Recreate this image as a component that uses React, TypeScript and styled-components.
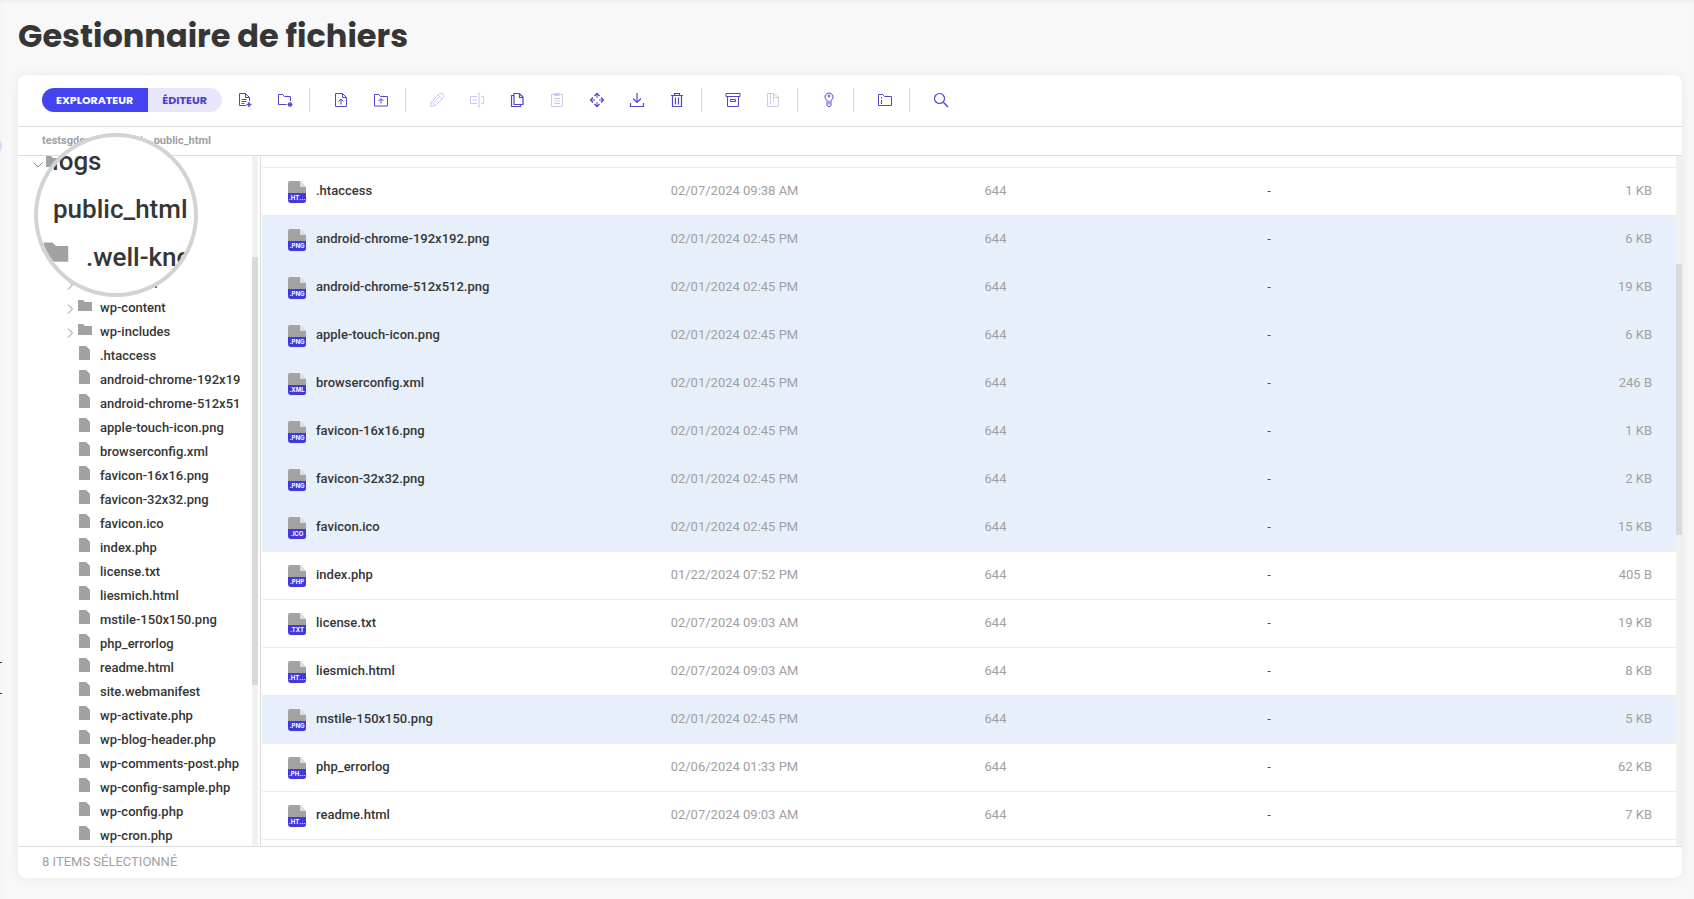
import React from "react";
import styled, { createGlobalStyle, css } from "styled-components";

const GlobalStyle = createGlobalStyle`
  *, *::before, *::after { box-sizing: border-box; }
  body {
    margin: 0;
    background: #f8f8f8;
    color: #363636;
    font-family: Roboto, "Liberation Sans", sans-serif;
    font-size: 13px;
    line-height: 24px;
  }
`;

const Page = styled.div`
  position: relative;
  display: flex;
  flex-direction: column;
  height: 100vh;
  padding: 16px 12px 21px 18px;
  overflow: hidden;
  box-shadow: inset 0 3px 4px -1px #ececec;
`;

/* Slivers of the collapsed navigation that peek in at the left edge. */
const NavBubble = styled.span`
  position: absolute;
  top: 136px;
  left: -18px;
  width: 20px;
  height: 20px;
  border-radius: 50%;
  background: #cfe0fb;
`;

const NavMark = styled.span<{ $top: number }>`
  position: absolute;
  top: ${(p) => p.$top}px;
  left: 0;
  width: 2px;
  height: 1px;
  background: #333;
`;

const Title = styled.h1`
  margin: 0 0 19px;
  font-family: Poppins, Inter, sans-serif;
  font-size: 32px;
  font-weight: 700;
  line-height: 40px;
`;

const Card = styled.main`
  position: relative;
  flex: 1;
  min-height: 0;
  display: flex;
  flex-direction: column;
  background: #fff;
  border-radius: 8px;
  box-shadow: 0 0 12px rgba(0, 0, 0, 0.07);
`;

const Toolbar = styled.div`
  flex: none;
  display: flex;
  align-items: center;
  height: 52px;
  padding: 0 24px 2px;
  border-bottom: 1px solid #dcdcdc;
`;

const Tabs = styled.div`
  display: flex;
  height: 24px;
  margin-right: 3px;
  border-radius: 12px;
  overflow: hidden;
`;

const Tab = styled.button<{ $active?: boolean }>`
  border: 0;
  padding: 0 15px 0 14px;
  font-family: Poppins, "Open Sans", sans-serif;
  font-size: 11px;
  font-weight: 700;
  line-height: 24px;
  color: ${(p) => (p.$active ? "#fff" : "#4a3fd0")};
  background: ${(p) => (p.$active ? "#4343f0" : "#e9e6fc")};
`;

const ToolButton = styled.button`
  display: flex;
  align-items: center;
  justify-content: center;
  width: 40px;
  height: 24px;
  padding: 0;
  border: 0;
  background: none;
  color: #5247cc;
  &:disabled { color: #cdc8f2; }
`;

const Divider = styled.span`
  width: 1px;
  height: 24px;
  margin: 0 11px 0 4px;
  background: #d6d6d6;
`;

const Icon = styled.svg`
  width: 16px;
  height: 16px;
  fill: none;
  stroke: currentColor;
`;

const Breadcrumb = styled.nav`
  flex: none;
  display: flex;
  height: 29px;
  padding-left: 24px;
  border-bottom: 1px solid #dcdcdc;
`;

const Crumb = styled.a`
  color: #a0a0a0;
  font-size: 11px;
  font-weight: 700;
  line-height: 28px;
  text-decoration: none;
  &:not(:last-child)::after { content: "/"; margin: 0 11px 0 4px; }
`;

const Body = styled.div`
  flex: 1;
  min-height: 0;
  display: flex;
`;

const Sidebar = styled.aside`
  flex: none;
  display: flex;
  justify-content: space-between;
  width: 243px;
  padding-right: 2px;
  border-right: 1px solid #dcdcdc;
  overflow: hidden;
`;

const Tree = styled.ul`
  width: 222px;
  margin: -2px 0 0;
  padding: 0;
  list-style: none;
  overflow: hidden;
`;

const TreeItem = styled.li<{ $root?: boolean }>`
  display: flex;
  height: 24px;
  padding-left: ${(p) => (p.$root ? 14 : 46)}px;
  font-weight: 500;
  line-height: 20px;
  white-space: nowrap;
`;

const Chevron = styled.svg`
  flex: none;
  width: 12px;
  height: 12px;
  margin-top: 5px;
  fill: none;
  stroke: #8c8c8c;
`;

const TreeIcon = styled.svg`
  flex: none;
  width: 16px;
  height: 16px;
  margin: 0 7px 0 1px;
  fill: #a2a2a2;
`;

const Track = styled.div`
  flex: none;
  width: 6px;
  background: #f1f1f1;
`;

const Thumb = styled.div<{ $from: number; $size: number }>`
  position: relative;
  top: ${(p) => p.$from}%;
  height: ${(p) => p.$size}%;
  background: #d9d9d9;
`;

const Listing = styled.section`
  flex: 1;
  min-width: 0;
  padding-left: 1px;
  overflow: hidden;
`;

const Table = styled.table`
  width: 100%;
  border-collapse: separate;
  border-spacing: 0;
  table-layout: fixed;
`;

const HeadRow = styled.tr`
  height: 12px;
  th {
    height: 12px;
    padding: 0;
    border-bottom: 1px solid #ededed;
    &:nth-child(1) { width: 28.9%; }
    &:nth-child(2) { width: 22.2%; }
    &:nth-child(3) { width: 20%; }
    &:nth-child(4) { width: 14%; }
  }
`;

const Row = styled.tr<{ $selected: boolean }>`
  height: 48px;
  td {
    padding: 0 0 2px;
    color: #a0a0a0;
    border-bottom: 1px solid #ededed;
    ${(p) => p.$selected && css`
      background: #e7effb;
      border-bottom-color: #e7effb;
    `}
  }
  td:nth-child(4) { color: #555; }
  td:last-child { padding-right: 24px; text-align: right; }
`;

const NameCell = styled.div`
  display: flex;
  align-items: center;
  gap: 10px;
  padding-left: 26px;
  color: #363636;
  font-weight: 500;
`;

const FileBadge = styled.span`
  display: flex;
  align-items: flex-end;
  width: 18px;
  height: 22px;
  margin-top: 2px;
  border-radius: 2px;
  background:
    linear-gradient(225deg, transparent 50%, #dcdcdc 50%) top right / 6px 6px no-repeat,
    linear-gradient(#a3a3a3, #a3a3a3) top left / 12px 14px no-repeat,
    linear-gradient(#a3a3a3, #a3a3a3) bottom right / 6px 16px no-repeat;
`;

const FileExt = styled.span`
  width: 18px;
  height: 10px;
  border-radius: 0 0 3px 3px;
  background: #4338dc;
  color: #fff;
  font-family: Inter, sans-serif;
  font-size: 6px;
  font-weight: 700;
  line-height: 10px;
  text-align: center;
`;

const Footer = styled.footer`
  flex: none;
  height: 32px;
  padding-left: 24px;
  border-top: 1px solid #dcdcdc;
  color: #a0a0a0;
  line-height: 30px;
`;

const Lens = styled.div`
  position: absolute;
  top: 58px;
  left: 16px;
  width: 164px;
  height: 164px;
  border: 4px solid #d3d3d3;
  border-radius: 50%;
  background: #fff;
  overflow: hidden;
`;

const LensView = styled.div`
  display: flex;
  flex-direction: column;
  justify-content: flex-end;
  margin-top: 18px;
  width: 149px;
  height: 126px;
  overflow: hidden;
`;

const LensLine = styled.div<{ $indent: number }>`
  flex: none;
  display: flex;
  align-items: center;
  gap: 16px;
  height: 48px;
  padding-left: ${(p) => p.$indent}px;
  font-size: 26px;
  font-weight: 500;
  white-space: nowrap;
`;

const LensFolder = styled.svg`
  flex: none;
  width: 28px;
  height: 28px;
  margin-bottom: 8px;
  fill: #a2a2a2;
`;

const folderShape = "M1 2h5l2 2h7v9H1z";
const fileShape = "M2 1q0-1 1-1h6l4 4v10H2z";

const icons: Record<string, React.ReactNode> = {
  newFile: <><path d="M9 13.500H2.500v-12h6l4 4v3.500M8.500 1.500v4h4M4.500 7.500h5M4.500 9.500h5M4.500 11.500h3" /><path d="M9.500 12.500h5M12 10v5" strokeWidth="1.500" /></>,
  newFolder: <path d="M9.500 12.500h-8v-10h4l2 2h6V9M10.500 12.500h5M13 10v5M11.500 11h3v3h-3z" />,
  upFile: <path d="M2.500 1.500h7l4 4v9h-11zM9.500 1.500v4h4M8 12.500v-5M5.500 9.500L8 7l2.500 2.500" />,
  upFolder: <path d="M1.500 14V2.500h4l2 2h7V14zM8 11.500V7M5.500 9L8 6.500 10.500 9" />,
  edit: <path d="M1.500 14.500l1-5 8-8q2-1 3.500 .5t.5 3.500l-8 8zM2.500 9.500l4 4M9 3l4 4M5 10l5-5" />,
  rename: <path d="M8 4.500H1.500v7H8M3.500 8h4M10 1.500v13M12 4.500h2.500v7H12M8.500 1.500h3M8.500 14.500h3" />,
  copy: <path d="M5 1.500h5.500l3.500 3.500v7.500H5zM10.500 1.500V5.500H14M5 3.500H2.500v11h9v-2" strokeWidth="1.200" />,
  paste: <path d="M2.500 2.500h11v12h-11zM5.500 1.500h5v2h-5zM5 6.500h6M5 9h6M5 11.500h6" />,
  move: <><path d="M8 2v4M8 10v4M2 8h4M10 8h4" /><path d="M5.500 4L8 1.500 10.500 4M5.500 12L8 14.500l2.500-2.500M4 5.500L1.500 8 4 10.500M12 5.500L14.500 8 12 10.500" strokeWidth="1.300" /></>,
  download: <path d="M8 1v9M4 6.500l4 4 4-4M1.500 11v3.500h13V11" strokeWidth="1.200" />,
  trash: <path d="M2 3.500h12M5.500 3.500v-2h5v2M3.500 3.500v11h9v-11M6.500 5.500v7M9.500 5.500v7" strokeWidth="1.200" />,
  archive: <path d="M1 1.500h14v3H1zM2.500 4.500v10h11v-10M5.500 7.500h5v2h-5z" />,
  extract: <path d="M2.500 14.500v-13h6l5 4v9zM5.500 1.500v11M8.500 5.500v4M8.500 5.500h5M8.500 1.500v4" />,
  key: <><path d="M6 8.500A4 4 0 1 1 10 8.500V13.500L8 15l-2-1.500z" /><circle cx="8" cy="4" r="1" /><path d="M8 8.500v4" /></>,
  info: <path d="M1.500 13.500v-11h4l2 2h7v9zM4.500 5v1.500M4.500 8v4" />,
  search: <><circle cx="6.500" cy="6.500" r="5" strokeWidth="1.200" /><path d="M10.500 10.500l4.500 4.500" strokeWidth="1.400" /></>,
};

type Tool = [name: string, label: string, disabled?: boolean];

const toolGroups: Tool[][] = [
  [["newFile", "Nouveau fichier"], ["newFolder", "Nouveau dossier"]],
  [["upFile", "Importer un fichier"], ["upFolder", "Importer un dossier"]],
  [
    ["edit", "Modifier", true], ["rename", "Renommer", true], ["copy", "Copier"],
    ["paste", "Coller", true], ["move", "Déplacer"], ["download", "Télécharger"], ["trash", "Supprimer"],
  ],
  [["archive", "Archiver"], ["extract", "Extraire", true]],
  [["key", "Permissions"]],
  [["info", "Informations"]],
  [["search", "Rechercher"]],
];

/* Unnamed entries lie fully under the lens. */
const treeFolders = ["", "", "", "", "wp-admin", "wp-content", "wp-includes"];

const treeFiles = [
  ".htaccess", "android-chrome-192x192.png", "android-chrome-512x512.png", "apple-touch-icon.png",
  "browserconfig.xml", "favicon-16x16.png", "favicon-32x32.png", "favicon.ico", "index.php",
  "license.txt", "liesmich.html", "mstile-150x150.png", "php_errorlog", "readme.html",
  "site.webmanifest", "wp-activate.php", "wp-blog-header.php", "wp-comments-post.php",
  "wp-config-sample.php", "wp-config.php", "wp-cron.php",
];

type FileEntry = [name: string, ext: string, date: string, size: string, selected?: boolean];

const files: FileEntry[] = [
  [".htaccess", ".HT...", "02/07/2024 09:38 AM", "1 KB"],
  ["android-chrome-192x192.png", ".PNG", "02/01/2024 02:45 PM", "6 KB", true],
  ["android-chrome-512x512.png", ".PNG", "02/01/2024 02:45 PM", "19 KB", true],
  ["apple-touch-icon.png", ".PNG", "02/01/2024 02:45 PM", "6 KB", true],
  ["browserconfig.xml", ".XML", "02/01/2024 02:45 PM", "246 B", true],
  ["favicon-16x16.png", ".PNG", "02/01/2024 02:45 PM", "1 KB", true],
  ["favicon-32x32.png", ".PNG", "02/01/2024 02:45 PM", "2 KB", true],
  ["favicon.ico", ".ICO", "02/01/2024 02:45 PM", "15 KB", true],
  ["index.php", ".PHP", "01/22/2024 07:52 PM", "405 B"],
  ["license.txt", ".TXT", "02/07/2024 09:03 AM", "19 KB"],
  ["liesmich.html", ".HT...", "02/07/2024 09:03 AM", "8 KB"],
  ["mstile-150x150.png", ".PNG", "02/01/2024 02:45 PM", "5 KB", true],
  ["php_errorlog", ".PH...", "02/06/2024 01:33 PM", "62 KB"],
  ["readme.html", ".HT...", "02/07/2024 09:03 AM", "7 KB"],
];

export default function App() {
  return (
    <Page>
      <GlobalStyle />
      <NavBubble />
      <NavMark $top={662} />
      <NavMark $top={693} />
      <Title>Gestionnaire de fichiers</Title>
      <Card>
        <Toolbar>
          <Tabs>
            <Tab $active>EXPLORATEUR</Tab>
            <Tab>ÉDITEUR</Tab>
          </Tabs>
          {toolGroups.map((group, i) => (
            <React.Fragment key={i}>
              {i > 0 && <Divider />}
              {group.map(([name, label, disabled]) => (
                <ToolButton key={name} aria-label={label} disabled={disabled}>
                  <Icon viewBox="0 0 16 16">{icons[name]}</Icon>
                </ToolButton>
              ))}
            </React.Fragment>
          ))}
        </Toolbar>
        <Breadcrumb>
          <Crumb href="#root">testsgdomain.com</Crumb>
          <Crumb href="#public_html">public_html</Crumb>
        </Breadcrumb>
        <Body>
          <Sidebar>
            <Tree>
              <TreeItem $root>
                <Chevron viewBox="0 0 12 12"><path d="M1.500 3.500L6 8l4.500-4.500" /></Chevron>
                <TreeIcon viewBox="0 0 16 16"><path d={folderShape} /></TreeIcon>
              </TreeItem>
              {treeFolders.map((name, i) => (
                <TreeItem key={i}>
                  <Chevron viewBox="0 0 12 12"><path d="M4 1.500L8.500 6 4 10.500" /></Chevron>
                  <TreeIcon viewBox="0 0 16 16"><path d={folderShape} /></TreeIcon>
                  {name}
                </TreeItem>
              ))}
              {treeFiles.map((name) => (
                <TreeItem key={name}>
                  <Chevron />
                  <TreeIcon viewBox="0 0 16 16"><path d={fileShape} /></TreeIcon>
                  {name}
                </TreeItem>
              ))}
            </Tree>
            <Track><Thumb $from={14.600} $size={62} /></Track>
          </Sidebar>
          <Listing>
            <Table>
              <thead><HeadRow><th /><th /><th /><th /><th /></HeadRow></thead>
              <tbody>
                {files.map(([name, ext, date, size, selected]) => (
                  <Row key={name} $selected={!!selected}>
                    <td><NameCell><FileBadge><FileExt>{ext}</FileExt></FileBadge>{name}</NameCell></td>
                    <td>{date}</td>
                    <td>644</td>
                    <td>-</td>
                    <td>{size}</td>
                  </Row>
                ))}
              </tbody>
            </Table>
          </Listing>
          <Track><Thumb $from={15.700} $size={39.300} /></Track>
        </Body>
        <Footer>8 ITEMS SÉLECTIONNÉ</Footer>
        <Lens>
          <LensView>
            <LensLine $indent={14}>logs</LensLine>
            <LensLine $indent={15}>public_html</LensLine>
            <LensLine $indent={4}>
              <LensFolder viewBox="0 0 16 16"><path d={folderShape} /></LensFolder>
              .well-known
            </LensLine>
          </LensView>
        </Lens>
      </Card>
    </Page>
  );
}
